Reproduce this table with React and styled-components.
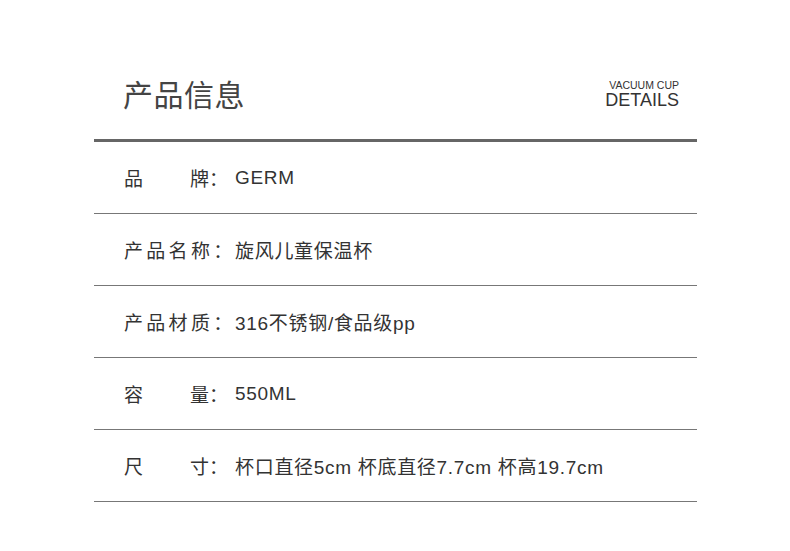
import React from 'react';
import styled, { createGlobalStyle } from 'styled-components';

const GlobalStyle = createGlobalStyle`
  body {
    margin: 0;
    background: #fff;
    font-family: "Liberation Sans", "Noto Sans CJK SC", sans-serif;
  }
`;

const Page = styled.div`
  width: 790px;
  padding-left: 94px;
  box-sizing: border-box;
`;

const Sheet = styled.div`
  width: 603px;
`;

const Header = styled.div`
  display: flex;
  justify-content: space-between;
  align-items: flex-end;
  height: 142px;
  box-sizing: border-box;
  padding: 0 18px 29px 29px;
  border-bottom: 3px solid #666;
`;

const Title = styled.h1`
  margin: 0;
  font-family: "Noto Sans CJK SC", sans-serif;
  font-size: 30px;
  line-height: 34px;
  font-weight: 400;
  color: #444;
  letter-spacing: 0.5px;
`;

const Tag = styled.div`
  display: flex;
  flex-direction: column;
  align-items: flex-end;
  color: #333;
`;

const TagSmall = styled.span`
  font-size: 10.5px;
  line-height: 12px;
`;

const TagBig = styled.span`
  font-size: 18px;
  line-height: 19px;
`;

const Row = styled.div`
  display: flex;
  align-items: center;
  height: 71px;
  padding-left: 30px;
  border-bottom: 1px solid #777;
  color: #333;
  font-size: 19px;
`;

const Label = styled.div`
  display: flex;
  flex-shrink: 0;
  justify-content: ${(p) => (p.$spread ? 'space-between' : 'flex-start')};
  width: 104px;
  margin-right: 7px;
  white-space: nowrap;
  font-family: "Noto Sans CJK SC", sans-serif;
  letter-spacing: ${(p) => (p.$spread ? '0' : '3.3px')};
`;

const Value = styled.div`
  font-family: "Liberation Sans", "Noto Sans CJK SC", sans-serif;
  letter-spacing: 0.7px;
  white-space: nowrap;
`;

const rows = [
  { label: ['品', '牌：'], value: 'GERM' },
  { label: '产品名称：', value: '旋风儿童保温杯' },
  { label: '产品材质：', value: '316不锈钢/食品级pp' },
  { label: ['容', '量：'], value: '550ML' },
  { label: ['尺', '寸：'], value: '杯口直径5cm 杯底直径7.7cm 杯高19.7cm' },
];

const App = () => (
  <>
    <GlobalStyle />
    <Page>
      <Sheet>
        <Header>
          <Title>产品信息</Title>
          <Tag>
            <TagSmall>VACUUM CUP</TagSmall>
            <TagBig>DETAILS</TagBig>
          </Tag>
        </Header>
        {rows.map((r, i) => (
          <Row key={i}>
            {Array.isArray(r.label) ? (
              <Label $spread>
                <span>{r.label[0]}</span>
                <span>{r.label[1]}</span>
              </Label>
            ) : (
              <Label>{r.label}</Label>
            )}
            <Value>{r.value}</Value>
          </Row>
        ))}
      </Sheet>
    </Page>
  </>
);

export default App;
